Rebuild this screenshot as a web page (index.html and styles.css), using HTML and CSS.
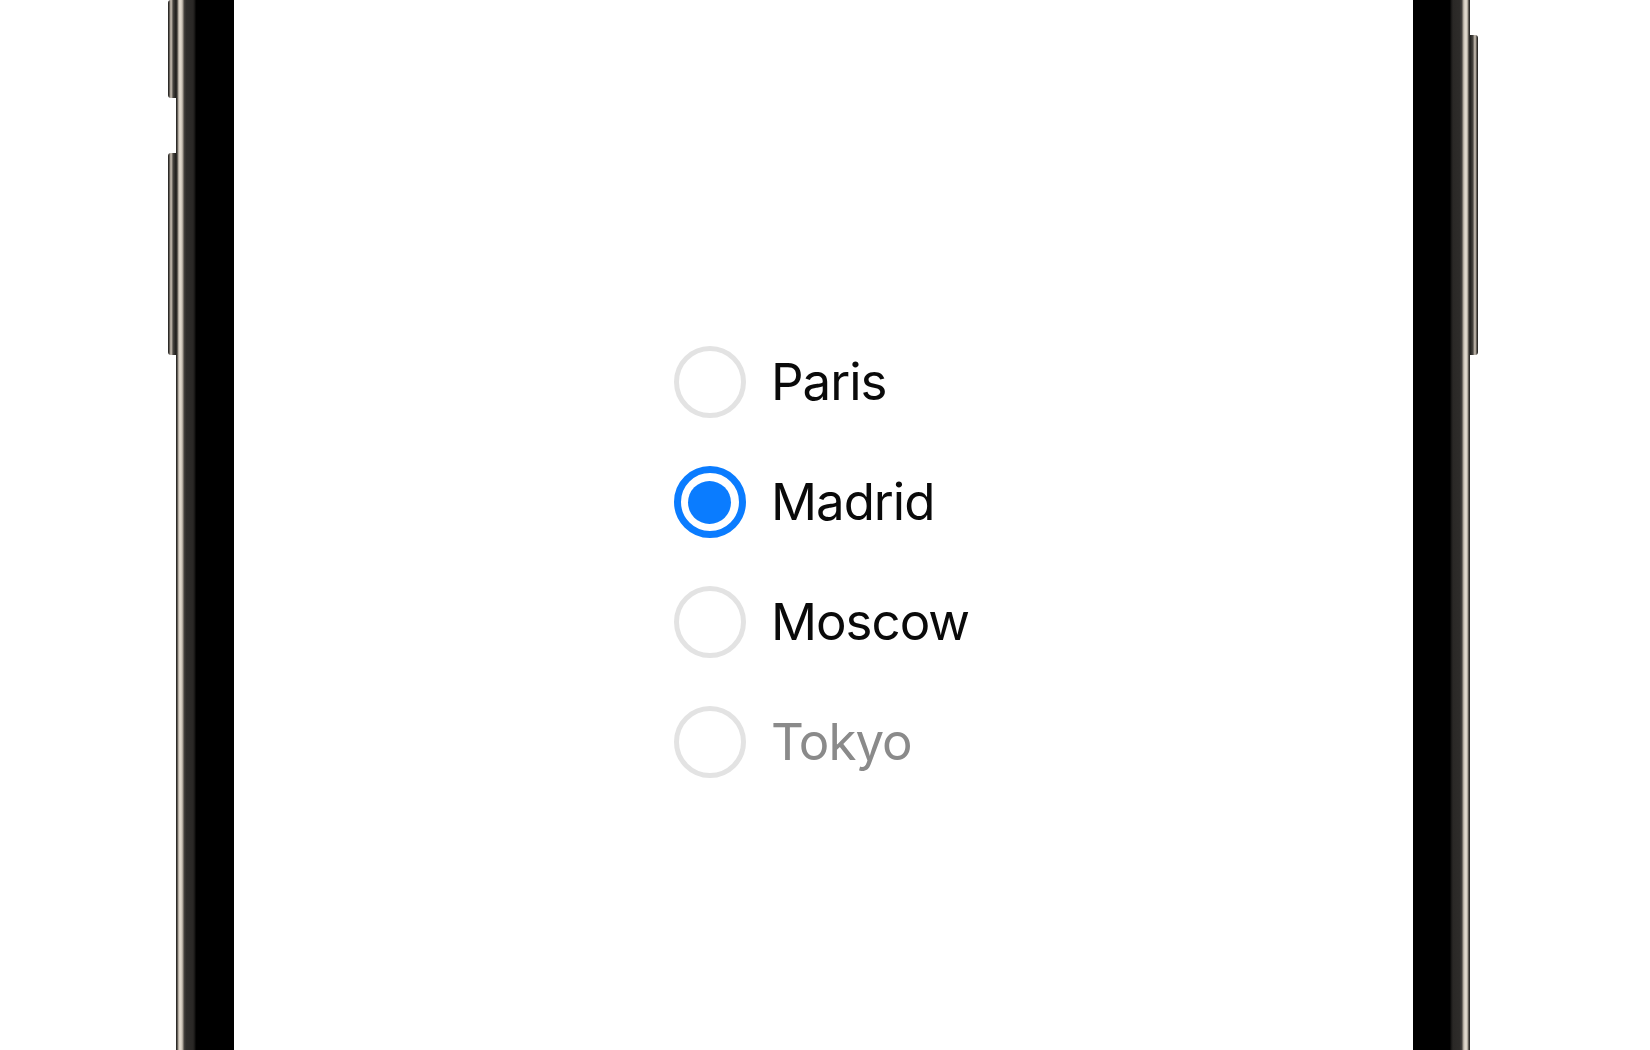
FILE: index.html
```html
<!DOCTYPE html>
<html lang="en">
<head>
<meta charset="utf-8">
<title>Radio group</title>
<link rel="stylesheet" href="styles.css">
</head>
<body>
<div class="device">
  <div class="side side-left">
    <span class="btn btn-action"></span>
    <span class="btn btn-volume"></span>
  </div>
  <div class="frame">
    <div class="screen">
      <ul class="radio-group">
        <li class="radio-row">
          <span class="radio"></span>
          <span class="radio-label">Paris</span>
        </li>
        <li class="radio-row">
          <span class="radio radio-checked"><span class="radio-dot"></span></span>
          <span class="radio-label">Madrid</span>
        </li>
        <li class="radio-row">
          <span class="radio"></span>
          <span class="radio-label">Moscow</span>
        </li>
        <li class="radio-row radio-disabled">
          <span class="radio"></span>
          <span class="radio-label">Tokyo</span>
        </li>
      </ul>
    </div>
  </div>
  <div class="side side-right">
    <span class="btn btn-power"></span>
  </div>
</div>
</body>
</html>
```

FILE: styles.css
```css
* {
  box-sizing: border-box;
}

html, body {
  margin: 0;
  padding: 0;
  background: #ffffff;
}

body {
  width: 1650px;
  height: 1050px;
  overflow: hidden;
  font-family: Inter, "Noto Sans", "Liberation Sans", sans-serif;
}

.device {
  display: flex;
  height: 1050px;
  margin-left: 168px;
}

.side {
  display: flex;
  flex-direction: column;
  width: 8px;
}

.btn {
  display: block;
  width: 8px;
}

.side-left .btn {
  border-radius: 3px 0 0 3px;
  background: linear-gradient(to right, #1c1b19 0, #3d3a36 1px, #8e867c 2px, #cbc2b6 3px, #9c948a 4px, #4a4742 5px, #2c2a27 7px, #1e1d1b 8px);
}

.side-right .btn {
  border-radius: 0 3px 3px 0;
  background: linear-gradient(to left, #1c1b19 0, #3d3a36 1px, #8e867c 2px, #cbc2b6 3px, #9c948a 4px, #4a4742 5px, #2c2a27 7px, #1e1d1b 8px);
}

.btn-action {
  height: 98px;
  border-top-left-radius: 0;
}

.btn-volume {
  height: 202px;
  margin-top: 55px;
}

.btn-power {
  height: 320px;
  margin-top: 35px;
}

.frame {
  display: flex;
  width: 1294px;
  height: 1050px;
  padding: 0 57px 0 58px;
  background: linear-gradient(to right,
    #1f1e1c 0, #3b3834 1px, #8c857b 2px, #d9d1c5 3px, #e2dace 5px, #a39b90 7px,
    #45423e 8px, #2e2c2a 10px, #2a2826 17px, #151413 19px, #000 20px,
    #000 calc(100% - 20px), #151413 calc(100% - 19px), #2a2826 calc(100% - 17px),
    #2e2c2a calc(100% - 10px), #45423e calc(100% - 8px), #a39b90 calc(100% - 7px),
    #e2dace calc(100% - 5px), #d9d1c5 calc(100% - 3px), #8c857b calc(100% - 2px),
    #3b3834 calc(100% - 1px), #1f1e1c 100%);
}

.screen {
  flex: 1;
  display: flex;
  justify-content: center;
  align-items: flex-start;
  padding-top: 346px;
  background: #ffffff;
}

.radio-group {
  list-style: none;
  margin: 0;
  padding: 0 4px 0 0;
  display: flex;
  flex-direction: column;
  gap: 48px;
}

.radio-row {
  display: flex;
  align-items: center;
  gap: 25px;
  height: 72px;
}

.radio {
  flex: none;
  display: flex;
  align-items: center;
  justify-content: center;
  width: 72px;
  height: 72px;
  border-radius: 50%;
  border: 5px solid #e3e3e3;
  background: #ffffff;
}

.radio-checked {
  border: 7px solid #0a7cff;
}

.radio-dot {
  width: 43px;
  height: 43px;
  border-radius: 50%;
  background: #0a7cff;
}

.radio-label {
  font-size: 51px;
  line-height: 1.2;
  color: #0a0a0a;
  letter-spacing: -1px;
}

.radio-disabled .radio-label {
  color: #8a8a8a;
}
```
